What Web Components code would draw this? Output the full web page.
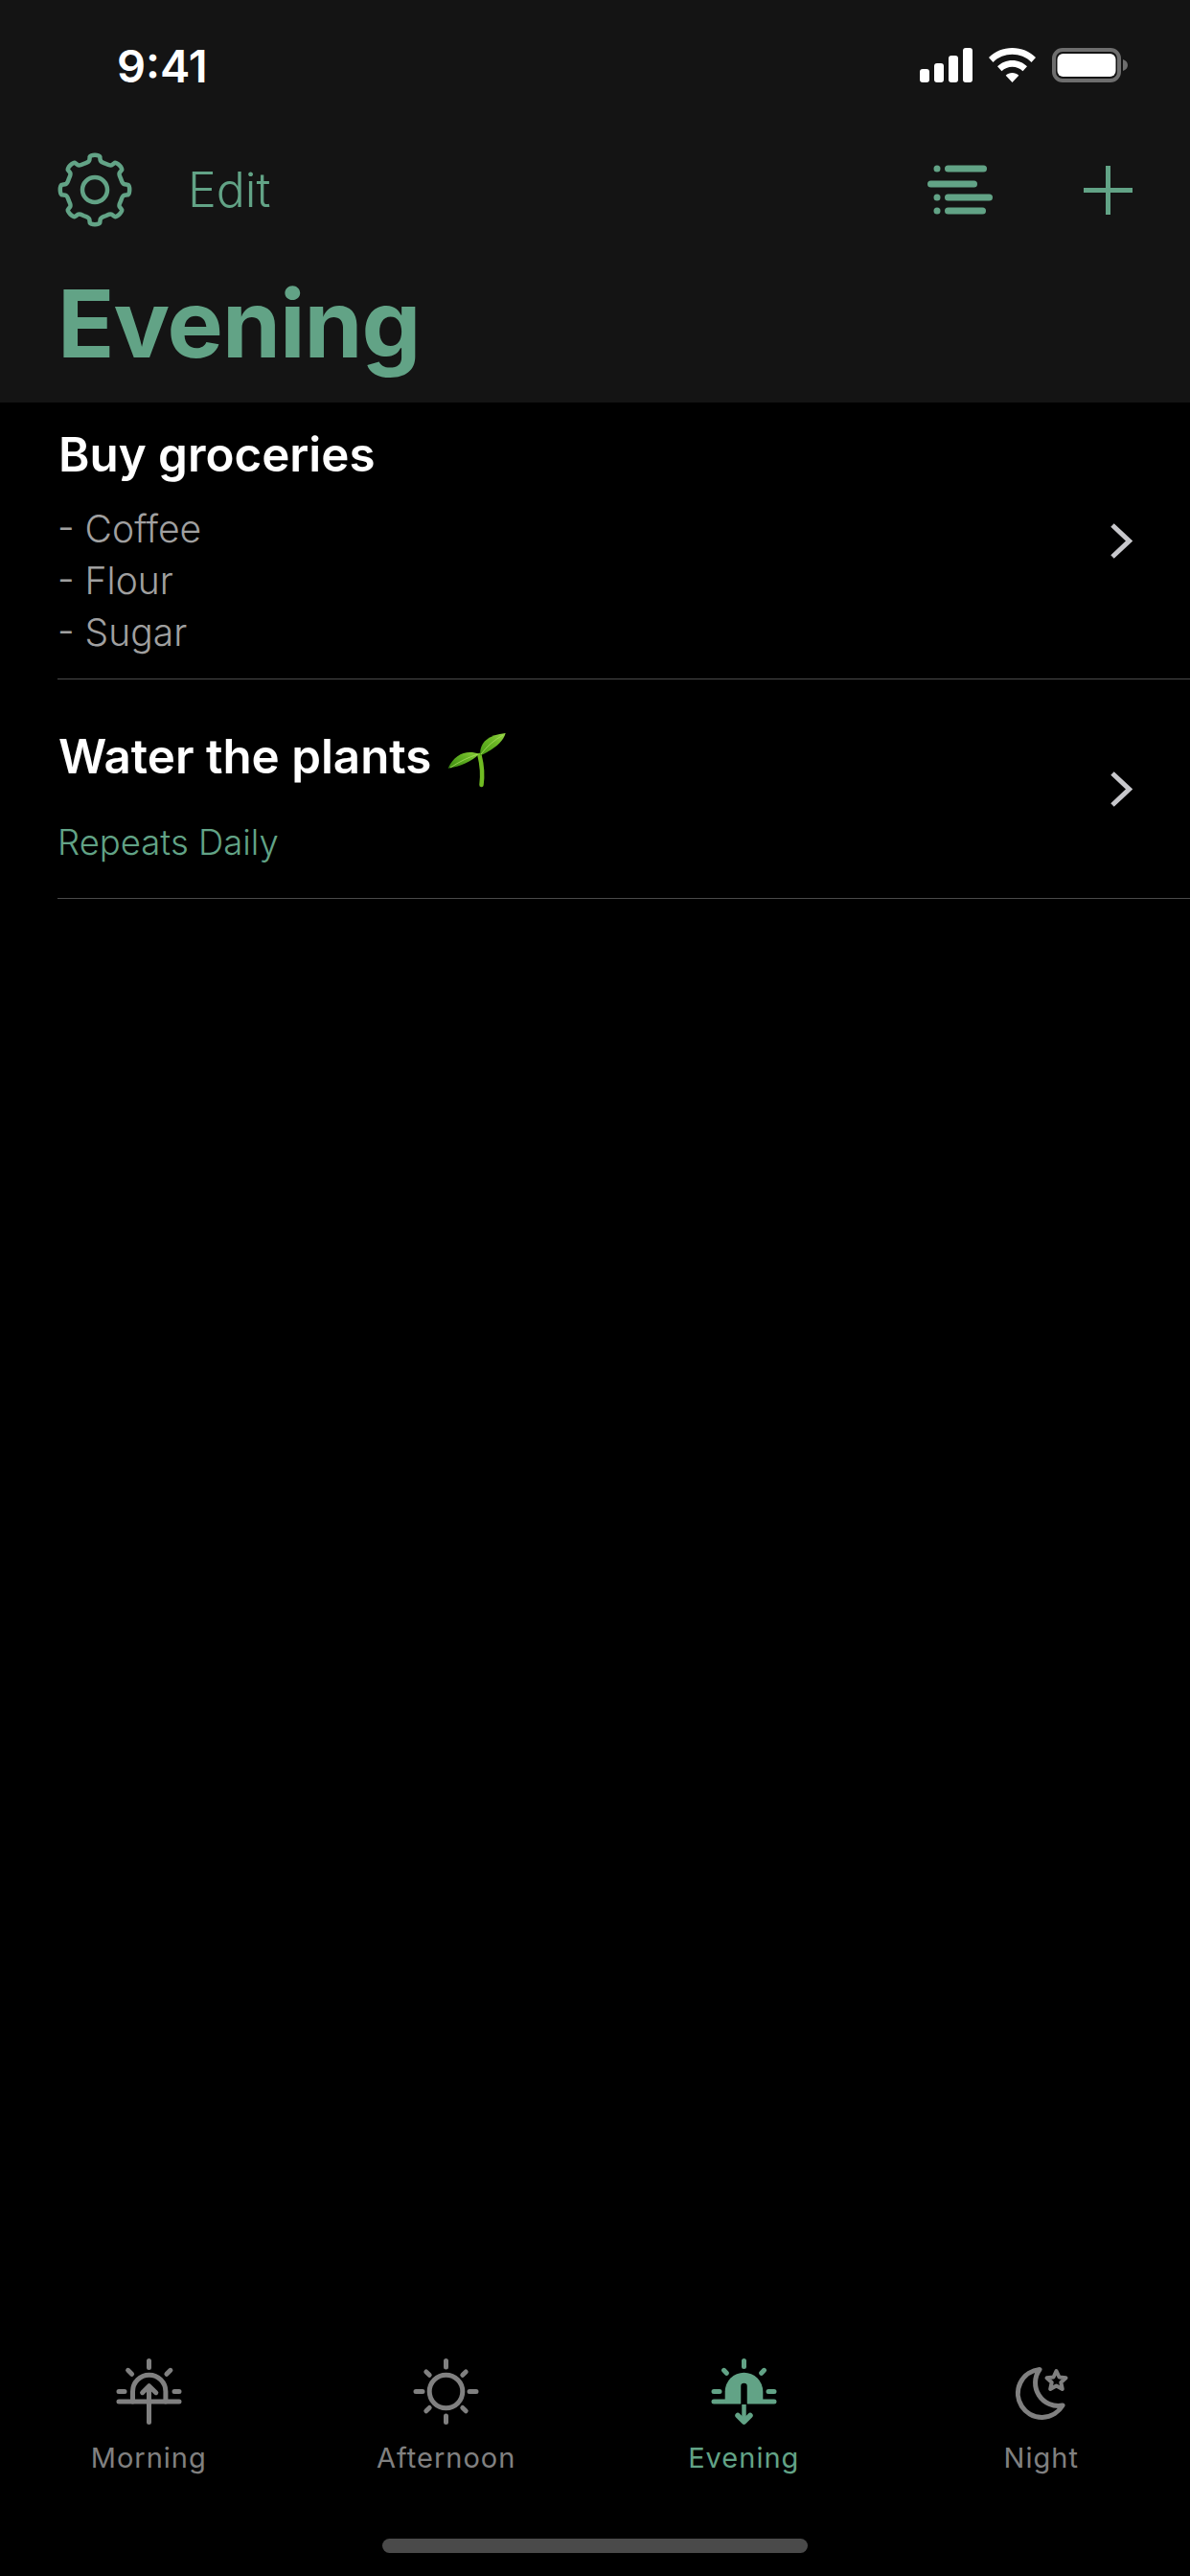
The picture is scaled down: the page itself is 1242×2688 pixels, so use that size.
<!DOCTYPE html>
<html lang="en">
<head>
<meta charset="utf-8">
<title>Evening</title>
<style>
    html, body { margin: 0; padding: 0; background: #000; }
    body { font-family: "Inter", "Liberation Sans", sans-serif; }
</style>
</head>
<body>
<app-screen>
    <nav-header slot="header" title="Evening"></nav-header>
    <task-row>
        <span slot="title">Buy groceries</span>
        <div>- Coffee</div>
        <div>- Flour</div>
        <div>- Sugar</div>
    </task-row>
    <task-row variant="repeat">
        <span slot="title">Water the plants</span>
        <svg slot="emoji" style="margin: 5px 0 -5px" width="62" height="58" viewBox="0 0 62 58">
            <defs>
                <linearGradient id="leafA" x1="0" y1="1" x2="1" y2="0">
                    <stop offset="0" stop-color="#3a8a10"/>
                    <stop offset="0.6" stop-color="#62b022"/>
                    <stop offset="1" stop-color="#8ccf3a"/>
                </linearGradient>
                <linearGradient id="leafB" x1="0" y1="1" x2="1" y2="0">
                    <stop offset="0" stop-color="#4a9a16"/>
                    <stop offset="0.6" stop-color="#6cb826"/>
                    <stop offset="1" stop-color="#98d645"/>
                </linearGradient>
            </defs>
            <path d="M33.500 23C36 33 37 43 35.500 54" stroke="#70bb22" stroke-width="4.500" stroke-linecap="round" fill="none"/>
            <path d="M.7 36.700C7 22 20 17 33 21.700 25 30 13.500 34.500.7 36.700z" fill="url(#leafA)"/>
            <path d="M34.300 23.500C33 10 42 2 60.700 0 58 9 50 16 34.300 23.500z" fill="url(#leafB)"/>
            <path d="M35 22C41 14 49 7 58 2M3 36C12 30 22 25 32 22" stroke="#a8de60" stroke-width=".8" fill="none"/>
        </svg>
        <span class="repeat">Repeats Daily</span>
    </task-row>
    <tab-bar slot="footer">
        <tab-item name="morning" label="Morning"></tab-item>
        <tab-item name="afternoon" label="Afternoon"></tab-item>
        <tab-item name="evening" label="Evening" active></tab-item>
        <tab-item name="night" label="Night"></tab-item>
    </tab-bar>
</app-screen>

<script>
const GREEN = '#62a386';

let AppScreenTemplate = document.createElement('template');
AppScreenTemplate.innerHTML = `
    <style>
        :host {
            display: flex;
            flex-direction: column;
            height: 2688px;
            overflow: hidden;
            background: #000;
        }
        main { flex: 1; display: block; }
    </style>
    <slot name="header"></slot>
    <main><slot></slot></main>
    <slot name="footer"></slot>
`;

class AppScreen extends HTMLElement {
    constructor() {
        super();
        this.attachShadow({ mode: 'open' });
        this.shadowRoot.appendChild(AppScreenTemplate.content.cloneNode(true));
    }
}

let StatusBarTemplate = document.createElement('template');
StatusBarTemplate.innerHTML = `
    <style>
        :host {
            display: flex;
            align-items: center;
            justify-content: space-between;
            height: 136px;
            padding: 0 65px 0 122px;
            color: #fff;
        }
        .time { font: 600 47px/1 "Inter", sans-serif; letter-spacing: 0; }
        .icons { display: flex; align-items: center; gap: 17px; }
        svg { display: block; }
    </style>
    <span class="time">9:41</span>
    <div class="icons">
        <svg width="55" height="36" viewBox="0 0 55 36" fill="#fff">
            <rect x="0" y="22" width="10" height="14" rx="3"/>
            <rect x="15" y="16" width="10" height="20" rx="3"/>
            <rect x="30" y="8" width="10" height="28" rx="3"/>
            <rect x="45" y="0" width="10" height="36" rx="3"/>
        </svg>
        <svg width="49" height="36" viewBox="0 0 49 36" fill="#fff">
            <path d="M24.500 0C34 0 42.500 3.500 49 10l-4.500 5C39 9.500 32 6.800 24.500 6.800S10 9.500 4.500 15L0 10C6.500 3.500 15 0 24.500 0z"/>
            <path d="M24.500 13c6 0 11.500 2.300 15.500 6.300l-4.500 5c-3-3-6.800-4.600-11-4.600s-8 1.600-11 4.600l-4.500-5c4-4 9.500-6.300 15.500-6.300z"/>
            <path d="M24.500 26c2.600 0 5 1 6.800 2.700L24.500 36l-6.800-7.300c1.800-1.700 4.200-2.700 6.800-2.700z"/>
        </svg>
        <svg width="79" height="36" viewBox="0 0 79 36">
            <rect x="2" y="2" width="68" height="32" rx="9" fill="none" stroke="#6e6e6e" stroke-width="4"/>
            <rect x="5.500" y="6" width="61" height="24" rx="6" fill="#fff"/>
            <path d="M74 12c3 1 5 3 5 6s-2 5-5 6z" fill="#6e6e6e"/>
        </svg>
    </div>
`;

class StatusBar extends HTMLElement {
    constructor() {
        super();
        this.attachShadow({ mode: 'open' });
        this.shadowRoot.appendChild(StatusBarTemplate.content.cloneNode(true));
    }
}

// 8 toothed gear, rounded teeth and valleys
function gearPath(cx, cy, outer, inner, teeth) {
    const pt = (r, a) => (cx + r * Math.cos(a)).toFixed(2) + ' ' + (cy + r * Math.sin(a)).toFixed(2);
    const step = Math.PI * 2 / teeth;
    let d = '';
    for (let i = 0; i < teeth; i++) {
        const a = i * step - Math.PI / 2;
        const w = step * 0.23;
        d += (i === 0 ? 'M' : 'L') + pt(inner, a - step / 2);
        d += 'C' + pt(inner, a - step * 0.38) + ' ' + pt(inner - 0.2, a - w - 0.03) + ' ' + pt(inner + 2, a - w);
        d += 'L' + pt(outer - 2.5, a - w * 0.85);
        d += 'C' + pt(outer + 0.3, a - w * 0.8) + ' ' + pt(outer + 0.3, a + w * 0.8) + ' ' + pt(outer - 2.5, a + w * 0.85);
        d += 'L' + pt(inner + 2, a + w);
        d += 'C' + pt(inner - 0.2, a + w + 0.03) + ' ' + pt(inner, a + step * 0.38) + ' ' + pt(inner, a + step / 2);
    }
    return d + 'Z';
}

let NavHeaderTemplate = document.createElement('template');
NavHeaderTemplate.innerHTML = `
    <style>
        :host {
            display: block;
            height: 420px;
            box-sizing: border-box;
            background: #141414;
            color: ${GREEN};
        }
        .bar {
            display: flex;
            align-items: center;
            height: 124px;
            padding: 0 60px;
        }
        .edit { font: 300 50px/1 "Inter", sans-serif; margin-left: 58px; }
        .spacer { flex: 1; }
        svg { display: block; }
        .list { margin-right: 95px; }
        h1 {
            margin: 0;
            padding: 24px 60px 0;
            font: 700 98px/1.1 "Inter", sans-serif;
            letter-spacing: -1px;
        }
    </style>
    <status-bar></status-bar>
    <div class="bar">
        <svg class="gear" width="78" height="78" viewBox="0 0 78 78" fill="none" stroke="${GREEN}" stroke-width="4.500" stroke-linejoin="round">
            <path class="teeth"/>
            <circle cx="39" cy="39" r="13"/>
        </svg>
        <span class="edit">Edit</span>
        <span class="spacer"></span>
        <svg class="list" width="68" height="52" viewBox="0 0 68 52" fill="${GREEN}">
            <circle cx="10" cy="4" r="3.500"/>
            <rect x="18" y="0.500" width="44" height="7" rx="3.500"/>
            <rect x="0" y="16.500" width="52" height="7" rx="3.500"/>
            <circle cx="10" cy="34" r="3.500"/>
            <rect x="18" y="30.500" width="50" height="7" rx="3.500"/>
            <circle cx="10" cy="48" r="3.500"/>
            <rect x="18" y="44.500" width="43" height="7" rx="3.500"/>
        </svg>
        <svg class="plus" width="51" height="51" viewBox="0 0 51 51" fill="${GREEN}">
            <rect x="23" y="0" width="5" height="51"/>
            <rect x="0" y="23" width="51" height="5"/>
        </svg>
    </div>
    <h1></h1>
`;

class NavHeader extends HTMLElement {
    constructor() {
        super();
        this.attachShadow({ mode: 'open' });
        this.shadowRoot.appendChild(NavHeaderTemplate.content.cloneNode(true));
        this.shadowRoot.querySelector('h1').innerText = this.getAttribute('title');
        this.shadowRoot.querySelector('.teeth').setAttribute('d', gearPath(39, 39, 37, 29.5, 8));
    }
}

let TaskRowTemplate = document.createElement('template');
TaskRowTemplate.innerHTML = `
    <style>
        :host { display: block; margin-left: 60px; border-bottom: 1px solid #4a4a4a; }
        .row { display: flex; align-items: center; padding-right: 60px; }
        .text { flex: 1; min-width: 0; }
        .title {
            display: flex;
            align-items: center;
            gap: 17px;
            margin-left: 1px;
            color: #fff;
            font: 600 49.300px/58px "Inter", sans-serif;
        }
        .content {
            margin-top: 22px;
            color: #a0a0a0;
            font: 300 39px/54px "Inter", sans-serif;
        }
        :host([variant="repeat"]) .content {
            margin-top: 34px;
            color: ${GREEN};
            font-size: 36.500px;
        }
        :host([variant="repeat"]) .text { padding-top: 19px; }
        :host(:not([variant])) .text { padding-top: 3px; }
        svg { display: block; }
    </style>
    <div class="row">
        <div class="text">
            <div class="title"><slot name="title"></slot><slot name="emoji"></slot></div>
            <div class="content"><slot></slot></div>
        </div>
        <svg width="23" height="37" viewBox="0 0 23 37" fill="none" stroke="#c8c8cc" stroke-width="5">
            <path d="M2 2l17.500 16.500L2 35"/>
        </svg>
    </div>
`;

class TaskRow extends HTMLElement {
    constructor() {
        super();
        this.attachShadow({ mode: 'open' });
        this.shadowRoot.appendChild(TaskRowTemplate.content.cloneNode(true));
        const row = this.shadowRoot.querySelector('.row');
        if (this.getAttribute('variant') === 'repeat') {
            row.style.height = '228px';
        } else {
            row.style.height = '288px';
        }
    }
}

const TAB_ICONS = {
    morning: `
        <path d="M34.500 2.500v7M12.600 12.300l4 4M56.900 12.300l-4 4M3 34.500h6M61 34.500h5M3 45h63"/>
        <path d="M17.500 45V34.500a17.200 17.200 0 0 1 34.400 0V45"/>
        <path d="M34.500 66.500V29M27.600 35.700l7-7 7.200 7"/>
    `,
    afternoon: `
        <circle cx="34.500" cy="34.500" r="17.300"/>
        <path d="M34.500 2.500v6.500M34.500 60v6.500M3 34.500h7M59 34.500h7M13.800 14l3.400 3.300M55.200 14l-3.400 3.300M13.800 54.800l3.400-3.300M55.200 54.800l-3.400-3.300"/>
    `,
    evening: `
        <path d="M34.500 2.500v6M13.500 12.300l2.800 3M55.500 12.300l-2.800 3M3 34.500h6M60 34.500h6M3 45h63"/>
        <path d="M14.700 47V34.500a19.800 19.800 0 0 1 39.600 0V47z" fill="currentColor" stroke="none"/>
        <path d="M34.500 29v18" stroke="#000" stroke-width="6.500" stroke-linecap="round"/>
        <rect x="31" y="47.500" width="7" height="3" fill="#000" stroke="none"/>
        <path d="M34.500 48v16" stroke-width="4.500" stroke-linecap="butt"/>
        <path d="M28 59.500l6.500 6.500 6.500-6.500" stroke-width="5.500"/>
    `,
    night: `
        <path d="M33 11.500A25 25 0 1 0 57 49 24 24 0 0 1 33 11.500z"/>
        <path d="M50.500 13l3 6.500 7 .8-5.200 4.700 1.500 7-6.300-3.600-6.300 3.600 1.500-7-5.200-4.700 7-.8z" stroke-width="4"/>
    `
};

let TabItemTemplate = document.createElement('template');
TabItemTemplate.innerHTML = `
    <style>
        :host {
            display: flex;
            flex-direction: column;
            align-items: center;
            color: #808080;
        }
        :host([active]) { color: ${GREEN}; }
        svg { display: block; }
        .label {
            margin-top: 17px;
            font: 400 29px/36px "Inter", sans-serif;
            letter-spacing: 1px;
        }
    </style>
    <svg width="69" height="69" viewBox="0 0 69 69" fill="none" stroke="currentColor" stroke-width="5" stroke-linecap="round" stroke-linejoin="round"></svg>
    <span class="label"></span>
`;

class TabItem extends HTMLElement {
    constructor() {
        super();
        this.attachShadow({ mode: 'open' });
        this.shadowRoot.appendChild(TabItemTemplate.content.cloneNode(true));
        this.shadowRoot.querySelector('svg').innerHTML = TAB_ICONS[this.getAttribute('name')];
        this.shadowRoot.querySelector('.label').innerText = this.getAttribute('label');
    }
}

let TabBarTemplate = document.createElement('template');
TabBarTemplate.innerHTML = `
    <style>
        :host { display: block; }
        .tabs { display: grid; grid-template-columns: repeat(4, 1fr); }
        .home {
            width: 444px;
            height: 15px;
            margin: 66px auto 24px;
            border-radius: 8px;
            background: #4a4a4a;
        }
    </style>
    <div class="tabs"><slot></slot></div>
    <div class="home"></div>
`;

class TabBar extends HTMLElement {
    constructor() {
        super();
        this.attachShadow({ mode: 'open' });
        this.shadowRoot.appendChild(TabBarTemplate.content.cloneNode(true));
    }
}

window.customElements.define('status-bar', StatusBar);
window.customElements.define('nav-header', NavHeader);
window.customElements.define('task-row', TaskRow);
window.customElements.define('tab-item', TabItem);
window.customElements.define('tab-bar', TabBar);
window.customElements.define('app-screen', AppScreen);
</script>
</body>
</html>
